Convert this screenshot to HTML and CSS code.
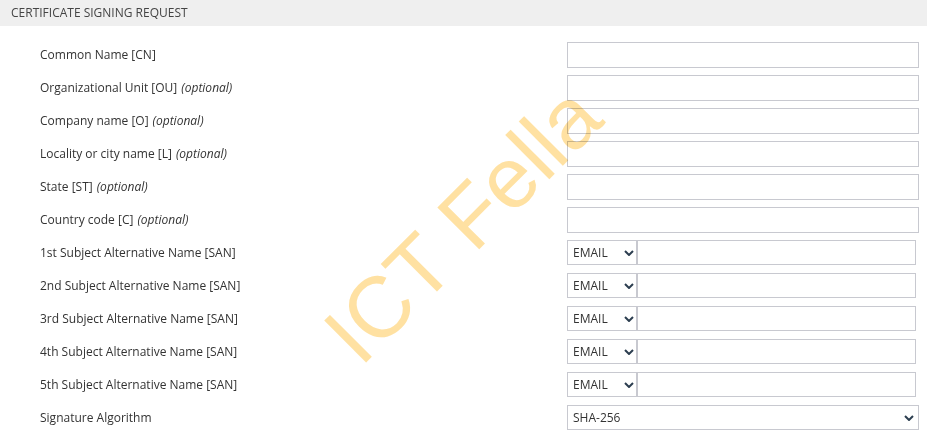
FILE: index.html
```html
<!DOCTYPE html>
<html lang="en">
<head>
  <meta charset="UTF-8">
  <meta name="viewport" content="width=device-width, initial-scale=1.0">
  <title>Certificate Signing Request</title>
  <link rel="stylesheet" href="styles.css">
</head>
<body>
  <div class="panel">
    <header class="panel-title">Certificate Signing Request</header>

    <form class="csr-form">
      <label class="field-label">Common Name [CN]</label>
      <input class="text-input" type="text">

      <label class="field-label">Organizational Unit [OU] <em>(optional)</em></label>
      <input class="text-input" type="text">

      <label class="field-label">Company name [O] <em>(optional)</em></label>
      <input class="text-input" type="text">

      <label class="field-label">Locality or city name [L] <em>(optional)</em></label>
      <input class="text-input" type="text">

      <label class="field-label">State [ST] <em>(optional)</em></label>
      <input class="text-input" type="text">

      <label class="field-label">Country code [C] <em>(optional)</em></label>
      <input class="text-input" type="text">

      <label class="field-label">1st Subject Alternative Name [SAN]</label>
      <div class="san-group">
        <div class="select-wrap san-type">
          <select><option>EMAIL</option></select>
          <svg class="chevron" viewBox="0 0 10 6"><path d="M1 1l4 4 4-4"/></svg>
        </div>
        <input class="text-input san-value" type="text">
      </div>

      <label class="field-label">2nd Subject Alternative Name [SAN]</label>
      <div class="san-group">
        <div class="select-wrap san-type">
          <select><option>EMAIL</option></select>
          <svg class="chevron" viewBox="0 0 10 6"><path d="M1 1l4 4 4-4"/></svg>
        </div>
        <input class="text-input san-value" type="text">
      </div>

      <label class="field-label">3rd Subject Alternative Name [SAN]</label>
      <div class="san-group">
        <div class="select-wrap san-type">
          <select><option>EMAIL</option></select>
          <svg class="chevron" viewBox="0 0 10 6"><path d="M1 1l4 4 4-4"/></svg>
        </div>
        <input class="text-input san-value" type="text">
      </div>

      <label class="field-label">4th Subject Alternative Name [SAN]</label>
      <div class="san-group">
        <div class="select-wrap san-type">
          <select><option>EMAIL</option></select>
          <svg class="chevron" viewBox="0 0 10 6"><path d="M1 1l4 4 4-4"/></svg>
        </div>
        <input class="text-input san-value" type="text">
      </div>

      <label class="field-label">5th Subject Alternative Name [SAN]</label>
      <div class="san-group">
        <div class="select-wrap san-type">
          <select><option>EMAIL</option></select>
          <svg class="chevron" viewBox="0 0 10 6"><path d="M1 1l4 4 4-4"/></svg>
        </div>
        <input class="text-input san-value" type="text">
      </div>

      <label class="field-label">Signature Algorithm</label>
      <div class="select-wrap algo">
        <select><option>SHA-256</option></select>
        <svg class="chevron" viewBox="0 0 10 6"><path d="M1 1l4 4 4-4"/></svg>
      </div>
    </form>

    <div class="watermark">ICT Fella</div>
  </div>
</body>
</html>
```

FILE: styles.css
```css
body {
  margin: 0;
  font-family: "Open Sans", Arial, sans-serif;
  font-size: 12px;
  color: #333;
  background: #fff;
}

.panel {
  position: relative;
  height: 441px;
  overflow: hidden;
}

.panel-title {
  height: 26px;
  line-height: 25px;
  padding-left: 11px;
  background: #efefef;
  color: #444;
  text-transform: uppercase;
}

.csr-form {
  display: grid;
  grid-template-columns: 527px 352px;
  grid-auto-rows: 26px;
  row-gap: 7px;
  padding: 16px 0 0 40px;
}

.field-label {
  display: flex;
  align-items: center;
  padding-bottom: 2px;
}

.field-label em {
  margin-left: 4px;
}

.text-input {
  box-sizing: border-box;
  width: 100%;
  height: 26px;
  margin: 0;
  border: 1px solid #c8c9d0;
  background: #fff;
  font: inherit;
  outline: none;
}

.san-group {
  display: flex;
  width: 349px;
  height: 25px;
}

.san-group .text-input {
  height: 25px;
  border-left: none;
}

.select-wrap {
  position: relative;
  height: 100%;
}

.select-wrap select {
  appearance: none;
  -webkit-appearance: none;
  box-sizing: border-box;
  width: 100%;
  height: 100%;
  margin: 0;
  padding: 0 0 0 5px;
  border: 1px solid #c8c9d0;
  border-radius: 0;
  background: #fff;
  font: inherit;
  color: #333;
}

.san-type {
  flex: 0 0 71px;
}

.san-type select {
  border-right-width: 2px;
}

.algo {
  width: 352px;
  height: 25px;
}

.chevron {
  position: absolute;
  top: 10px;
  right: 5px;
  width: 10px;
  height: 6px;
  fill: none;
  stroke: #2c3e50;
  stroke-width: 2;
  pointer-events: none;
}

.san-type .chevron {
  right: 4px;
}

.watermark {
  position: absolute;
  left: 462px;
  top: 224px;
  transform: translate(-50%, -50%) rotate(-45deg);
  font-family: "Liberation Sans", Arial, sans-serif;
  font-size: 86px;
  line-height: 1;
  white-space: nowrap;
  color: #ffe1a2;
  mix-blend-mode: multiply;
  pointer-events: none;
}
```
